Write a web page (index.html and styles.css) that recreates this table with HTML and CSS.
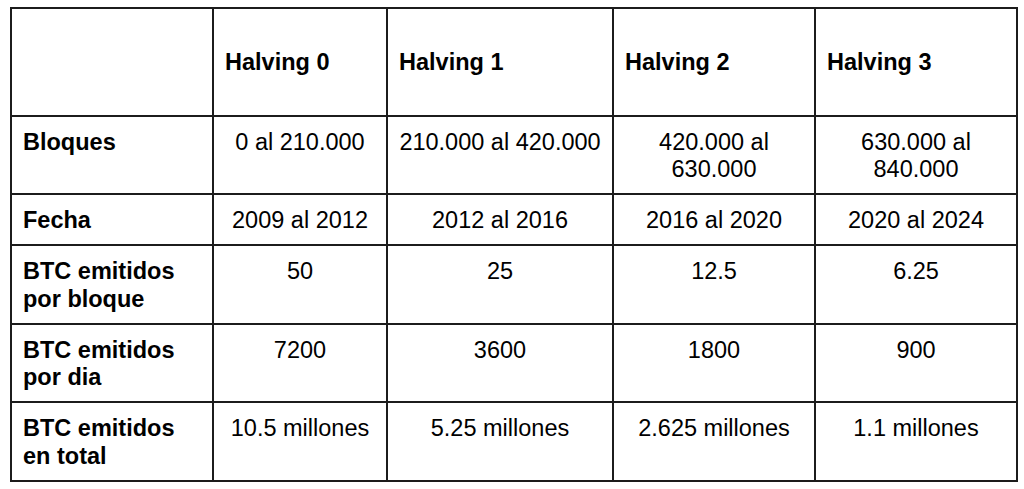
FILE: index.html
```html
<!DOCTYPE html>
<html lang="es">
<head>
<meta charset="utf-8">
<title>Halvings</title>
<link rel="stylesheet" href="styles.css">
</head>
<body>
<div class="page">
<table class="halving">
  <colgroup>
    <col class="c0"><col class="c1"><col class="c2"><col class="c3"><col class="c4">
  </colgroup>
  <thead>
    <tr class="r-head">
      <th></th>
      <th>Halving 0</th>
      <th>Halving 1</th>
      <th>Halving 2</th>
      <th>Halving 3</th>
    </tr>
  </thead>
  <tbody>
    <tr>
      <th>Bloques</th>
      <td>0 al 210.000</td>
      <td>210.000 al 420.000</td>
      <td>420.000 al<br>630.000</td>
      <td>630.000 al<br>840.000</td>
    </tr>
    <tr>
      <th>Fecha</th>
      <td>2009 al 2012</td>
      <td>2012 al 2016</td>
      <td>2016 al 2020</td>
      <td>2020 al 2024</td>
    </tr>
    <tr>
      <th>BTC emitidos<br>por bloque</th>
      <td>50</td>
      <td>25</td>
      <td>12.5</td>
      <td>6.25</td>
    </tr>
    <tr>
      <th>BTC emitidos<br>por dia</th>
      <td>7200</td>
      <td>3600</td>
      <td>1800</td>
      <td>900</td>
    </tr>
    <tr>
      <th>BTC emitidos<br>en total</th>
      <td>10.5 millones</td>
      <td>5.25 millones</td>
      <td>2.625 millones</td>
      <td>1.1 millones</td>
    </tr>
  </tbody>
</table>
</div>
</body>
</html>
```
FILE: styles.css
```css
html, body {
  margin: 0;
  padding: 0;
  background: #ffffff;
}

.page {
  padding: 7px 0 0 10px;
}

.halving {
  border-collapse: collapse;
  table-layout: fixed;
  width: 1006px;
  font-family: "Liberation Sans", Arial, sans-serif;
  font-size: 23.5px;
  line-height: 27.5px;
  color: #000000;
}

.c0 { width: 202px; }
.c1 { width: 174px; }
.c2 { width: 226px; }
.c3 { width: 202px; }
.c4 { width: 202px; }

.halving th,
.halving td {
  border: 2px solid #1c1c1c;
  padding: 12px 11px 9.5px;
  vertical-align: top;
}

.halving th {
  font-weight: bold;
  text-align: left;
}

.halving td {
  text-align: center;
  font-weight: normal;
}

.r-head th {
  padding-top: 39.5px;
  padding-bottom: 38.5px;
}
```
